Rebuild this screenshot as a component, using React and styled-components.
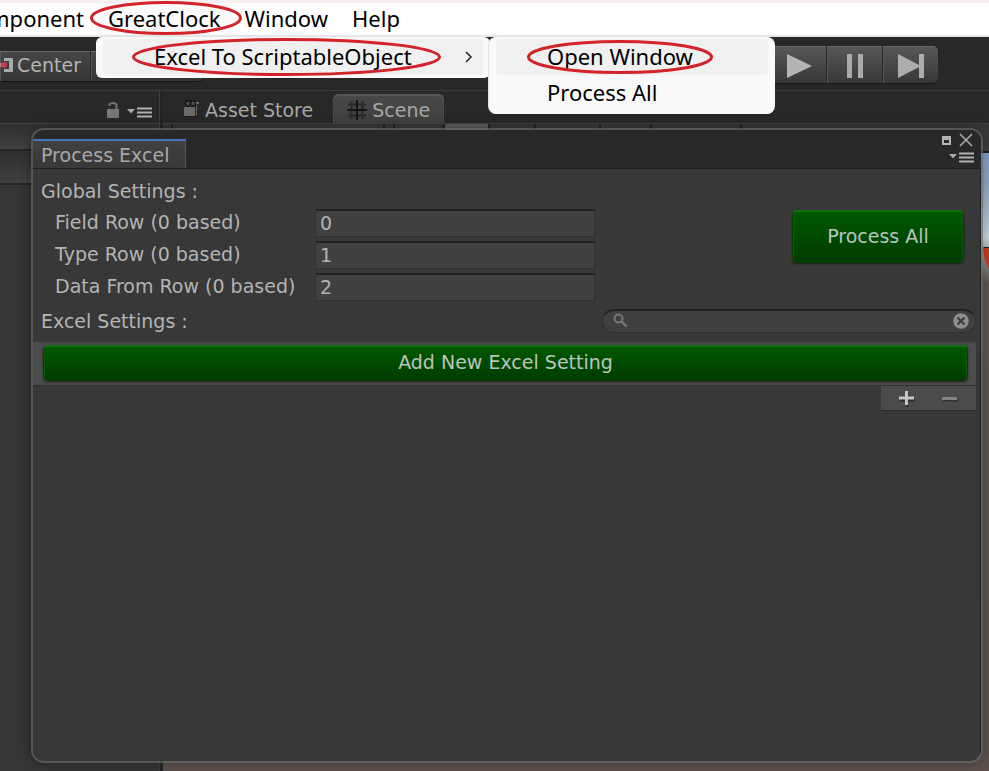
import React, { useState } from "react";
import styled, { createGlobalStyle } from "styled-components";

const GlobalStyle = createGlobalStyle`
  *, *::before, *::after { box-sizing: border-box; }
  body { margin: 0; background: #282828; }
  button, input { font: inherit; color: inherit; margin: 0; }
`;

const editorFont = '"DejaVu Sans", sans-serif';
const menuFont = '"Noto Sans", "Open Sans", sans-serif';

const Page = styled.div`
  position: relative;
  display: flex;
  flex-direction: column;
  min-height: 100vh;
  overflow: hidden;
  background: #282828;
  color: #b4b4b4;
  font: 19px/24px ${editorFont};
`;

/* ---------- menu bar ---------- */

const MenuBar = styled.nav`
  display: flex;
  height: 37px;
  border-top: 3px solid #f8eff1;
  border-bottom: 2px solid #e6e6e6;
  background: #fff;
  color: #000;
  font: 22px/32px ${menuFont};
`;

const MenuEntry = styled.div`
  position: relative;
  display: flex;
  flex: none;
`;

const MenuButton = styled.button`
  display: block;
  border: 0;
  padding: 0 12px 2px;
  background: ${(p) => (p.$open ? "#fafafa" : "transparent")};
  line-height: 30px;
`;

const ClippedEntry = styled(MenuEntry)`
  width: 96px;
  overflow: hidden;
  justify-content: flex-end;
`;

const Dropdown = styled.div`
  position: absolute;
  z-index: 5;
  top: 34px;
  left: 0;
  width: 394px;
  padding: 2px 7px 3px;
  border-radius: 6px;
  background: #f9f9f9;
`;

const Submenu = styled(Dropdown)`
  top: 0;
  left: 393px;
  width: 286px;
  border-radius: 8px;
  box-shadow: -1px 0 #e2e2e2;
`;

const MenuItem = styled.button`
  position: relative;
  display: flex;
  align-items: center;
  justify-content: space-between;
  width: 100%;
  height: 36px;
  border: 0;
  border-radius: 4px;
  padding: 0 10px 2px 51px;
  background: ${(p) => (p.$active ? "#f0f0f0" : "transparent")};
  line-height: 32px;
  white-space: nowrap;
`;

const Ring = styled.svg`
  position: absolute;
  z-index: 6;
  top: ${(p) => p.$top}px;
  left: ${(p) => p.$left}px;
  overflow: visible;
  pointer-events: none;
`;

function Highlight({ width, height, top, left }) {
  return (
    <Ring width={width} height={height} $top={top} $left={left} aria-hidden="true">
      <ellipse
        cx={width / 2}
        cy={height / 2}
        rx={width / 2 - 1.5}
        ry={height / 2 - 1.5}
        fill="none"
        stroke="#d2232a"
        strokeWidth="3"
      />
    </Ring>
  );
}

/* ---------- toolbar ---------- */

const Toolbar = styled.header`
  display: flex;
  justify-content: space-between;
  align-items: flex-start;
  height: 54px;
  padding: 9px 51px 0 0;
  border-bottom: 1px solid #3a3a3a;
`;

const ButtonGroup = styled.div`
  display: flex;
  overflow: hidden;
  margin-top: ${(p) => (p.$low ? 5 : 0)}px;
  border-radius: ${(p) => (p.$low ? "0 5px 5px 0" : "5px")};
  box-shadow: 0 1px 1px #151515;
`;

const ToolButton = styled.button`
  display: flex;
  align-items: center;
  justify-content: ${(p) => (p.$tall ? "center" : "flex-end")};
  gap: 4px;
  width: ${(p) => p.$width}px;
  height: ${(p) => (p.$tall ? 37 : 30)}px;
  padding: ${(p) => (p.$tall ? "3px 0 0" : "0 9px 2px 0")};
  border: solid #262626;
  border-width: 0 1px 0 0;
  background: linear-gradient(${(p) => (p.$tall ? "#585858, #383838" : "#474747, #353535")});
  box-shadow: inset 0 1px #6a6a6a, inset 1px 0 #565656;
  &:last-child { border-right: 0; }
`;

/* ---------- docked panels ---------- */

const Docks = styled.main`
  display: grid;
  grid-template-columns: 160px minmax(0, 1fr);
  column-gap: 3px;
  flex: 1;
  background: #242424;
`;

const Dock = styled.section`
  display: flex;
  flex-direction: column;
  background: #282828;
  border-right: ${(p) => (p.$edge ? "1px solid #404040" : "0")};
`;

const TabStrip = styled.div`
  display: flex;
  align-items: flex-end;
  justify-content: ${(p) => (p.$end ? "flex-end" : "flex-start")};
  gap: ${(p) => (p.$end ? 7 : 6)}px;
  height: 33px;
  padding: ${(p) => (p.$end ? "0 7px 5px 0" : "0 0 0 10px")};
  border-bottom: 1px solid #454545;
`;

const DockTab = styled.button`
  display: flex;
  align-items: center;
  gap: 5px;
  height: 29px;
  padding: 2px 14px 0 ${(p) => (p.$active ? 14 : 10)}px;
  border: 0;
  border-radius: 6px 6px 0 0;
  background: ${(p) => (p.$active ? "linear-gradient(#484848, #404040)" : "transparent")};
  box-shadow: ${(p) => (p.$active ? "inset 0 2px #565656, inset 1px 0 #4c4c4c, inset -1px 0 #4c4c4c" : "none")};
  color: #a6a6a6;
  white-space: nowrap;
`;

const IconButton = styled.button`
  display: flex;
  padding: 0;
  border: 0;
  background: none;
`;

const PanelHeader = styled.div`
  height: ${(p) => p.$height}px;
  border-bottom: 2px solid #242424;
  background: linear-gradient(#303030, #404040);
`;

const PanelBody = styled.div`
  flex: 1;
  background: #353535;
`;

const SceneBar = styled.div`
  display: flex;
  height: 29px;
  background: linear-gradient(#363636, #404040);
  border-bottom: 2px solid #202020;
`;

const SceneSegment = styled.div`
  width: ${(p) => p.$width}px;
  border-right: 2px solid #222;
  background: ${(p) => (p.$lit ? "#5a5a5a" : "transparent")};
`;

const SceneView = styled.div`
  flex: 1;
  display: flex;
  justify-content: flex-end;
  align-items: flex-start;
  padding-top: 94px;
  background: linear-gradient(#809fd0 0, #8da9c8 30px, #c5d9df 85px, #8d9494 105px, #605651 130px, #5c514c 100%);
`;

/* ---------- floating window ---------- */

const FloatingWindow = styled.section`
  position: absolute;
  z-index: 2;
  top: 128px;
  right: 6px;
  bottom: 8px;
  left: 31px;
  display: flex;
  flex-direction: column;
  overflow: hidden;
  border: 2px solid rgba(105, 105, 105, 0.65);
  border-radius: 13px;
  background: #383838;
  background-clip: padding-box;
  box-shadow: 0 0 14px rgba(0, 0, 0, 0.3);
`;

const TitleBar = styled.div`
  display: flex;
  justify-content: space-between;
  align-items: flex-end;
  flex: none;
  height: 39px;
  background: #282828;
  border-bottom: 1px solid #1e1e1e;
`;

const WindowTab = styled.h1`
  margin: 0;
  height: 29px;
  padding: 2px 16px 0 8px;
  border-top: 2px solid #4676ba;
  border-right: 1px solid #555;
  background: linear-gradient(#414141, #383838);
  color: #a8a8a8;
  font: inherit;
`;

const WindowControls = styled.div`
  display: grid;
  grid-template-columns: 11px 16px;
  gap: 5px 6px;
  justify-items: center;
  align-items: center;
  padding: 0 7px 5px 0;
`;

const WideCell = styled.div`
  grid-column: 1 / -1;
  justify-self: end;
`;

const WindowBody = styled.div`
  flex: 1;
  border-right: 1px solid #202020;
  padding: 10px 4px 0 0;
`;

const Heading = styled.h2`
  margin: 0;
  font: inherit;
`;

const GlobalSettings = styled.form`
  padding: 0 12px 0 8px;
`;

const SettingsRow = styled.div`
  display: flex;
  align-items: flex-start;
  justify-content: space-between;
  gap: 20px;
  padding: 6px 0 0 14px;
`;

const Fields = styled.div`
  display: grid;
  grid-template-columns: 260px minmax(80px, 280px);
  row-gap: 4px;
`;

const FieldLabel = styled.label`
  line-height: 27px;
  white-space: nowrap;
`;

const TextInput = styled.input`
  width: 100%;
  height: 28px;
  padding: 0 4px 2px;
  border: 1px solid #303030;
  border-top: 2px solid #232323;
  border-radius: 0;
  background: #414141;
  outline: 0;
`;

const GreenButton = styled.button`
  display: block;
  width: ${(p) => (p.$large ? "172px" : "100%")};
  height: ${(p) => (p.$large ? 53 : 36)}px;
  margin-top: ${(p) => (p.$large ? 1 : 0)}px;
  padding: 0 0 3px;
  border: 1px solid #004200;
  border-top: 2px solid #0d700d;
  border-radius: 5px;
  background: linear-gradient(#005800, #003b00);
  box-shadow: 0 1px 2px #1c1c1c, inset 1px 0 #075d07, inset -1px 0 #075d07;
  color: #b9c6b9;
`;

const ExcelHeader = styled.div`
  display: flex;
  align-items: center;
  justify-content: space-between;
  padding: 8px 0 9px 8px;
`;

const SearchBox = styled.div`
  display: flex;
  align-items: center;
  gap: 6px;
  width: 374px;
  height: 24px;
  padding: 0 6px 2px 10px;
  border: 1px solid #303030;
  border-top: 2px solid #202020;
  border-radius: 12px;
  background: #404040;
`;

const SearchInput = styled.input`
  flex: 1;
  min-width: 0;
  height: 20px;
  padding: 0;
  border: 0;
  background: none;
  outline: 0;
`;

const SettingList = styled.div`
  padding: 3px 8px 4px 10px;
  background: #4c4c4c;
  border-bottom: 1px solid #303030;
`;

const ListFooter = styled.div`
  display: flex;
  justify-content: space-around;
  align-items: center;
  width: 95px;
  height: 25px;
  margin-left: auto;
  padding: 0 4px;
  background: #4b4b4b;
  border-bottom: 1px solid #2a2a2a;
`;

/* ---------- icons ---------- */

const OptionsIcon = () => (
  <svg width="25" height="11" viewBox="0 0 25 11" aria-hidden="true">
    <path d="M0 2h8L4 6.500Z" fill="#aaa" />
    <path d="M10 1.500h15M10 5.500h15M10 9.500h15" stroke="#b0b0b0" strokeWidth="2" />
  </svg>
);

const LockIcon = () => (
  <svg width="14" height="16" viewBox="0 0 14 16" aria-hidden="true">
    <rect x="1" y="7" width="12" height="9" fill="#777" />
    <path d="M3.500 4V2.500C4 1.500 5 1 7 1s3.500.8 3.500 2.500V7" fill="none" stroke="#707070" strokeWidth="2" />
  </svg>
);

const CenterIcon = () => (
  <svg width="13" height="16" viewBox="0 0 13 16" aria-hidden="true">
    <path d="M4 1h9v14H4v-3h5V4H4Z" fill="#a9a9a9" />
    <path d="M0 6h4v4H0Z" fill="#968a8c" />
    <circle cx="4" cy="8" r="3" fill="#c83c50" />
  </svg>
);

const StoreIcon = () => (
  <svg width="17" height="20" viewBox="0 0 17 20" aria-hidden="true">
    <path d="M1 7h11v9H1Z" fill="#6b6b6b" />
    <path d="M12 2h4v2h-2v11h-1V4h-1Z" fill="#666" />
    <circle cx="5" cy="3.500" r="2.500" fill="#555" stroke="#111" strokeWidth="2" strokeDasharray="2 1" />
    <circle cx="10" cy="3.500" r="2.500" fill="#555" stroke="#111" strokeWidth="2" strokeDasharray="2 1" />
    <path d="M0 16.500h13" stroke="#1b1b1b" />
  </svg>
);

const GridIcon = () => (
  <svg width="20" height="20" viewBox="0 0 20 20" aria-hidden="true">
    <path d="M4.500 1v18M15.500 1v18M1 4.500h18M1 15.500h18" stroke="#292929" strokeWidth="2" />
    <path d="M10 0v20M0 10h20" stroke="#151515" strokeWidth="2" />
  </svg>
);

const PlayIcon = () => (
  <svg width="27" height="26" viewBox="0 0 27 26" aria-hidden="true">
    <path d="M1 1v24l25-12Z" fill="#b4b4b4" />
  </svg>
);

const PauseIcon = () => (
  <svg width="18" height="26" viewBox="0 0 18 26" aria-hidden="true">
    <path d="M1 1h5v24H1ZM12 1h5v24h-5Z" fill="#aaa" />
  </svg>
);

const StepIcon = () => (
  <svg width="28" height="26" viewBox="0 0 28 26" aria-hidden="true">
    <path d="M1 1v24l21-11v11h5V1h-5v11Z" fill="#adadad" />
  </svg>
);

const ChevronIcon = () => (
  <svg width="8" height="14" viewBox="0 0 8 14" aria-hidden="true">
    <path d="m1 3 5 5-5 5" fill="none" stroke="#222" strokeWidth="1.500" />
  </svg>
);

const MaximizeIcon = () => (
  <svg width="9" height="9" viewBox="0 0 9 9" aria-hidden="true">
    <path d="M0 0h9v9H0ZM2 4v3h5V4Z" fill="#b5b5b5" fillRule="evenodd" />
  </svg>
);

const CloseIcon = () => (
  <svg width="14" height="14" viewBox="0 0 14 14" aria-hidden="true">
    <path d="m1 1 12 12M13 1 1 13" stroke="#aaa" strokeWidth="1.600" />
  </svg>
);

const SearchIcon = () => (
  <svg width="15" height="15" viewBox="0 0 15 15" aria-hidden="true">
    <circle cx="5.500" cy="5.500" r="4" fill="none" stroke="#777" strokeWidth="2" />
    <path d="m8.500 8.500 5 5" stroke="#777" strokeWidth="2.400" />
  </svg>
);

const ClearIcon = () => (
  <svg width="16" height="16" viewBox="0 0 16 16" aria-hidden="true">
    <circle cx="8" cy="8" r="7.800" fill="#8e8e8e" />
    <path d="m4.500 4.500 7 7m0-7-7 7" stroke="#383838" strokeWidth="2" />
  </svg>
);

const PlusIcon = () => (
  <svg width="16" height="17" viewBox="0 0 16 17" aria-hidden="true">
    <path d="M8 2v15M1 10h15" stroke="#2c2c2c" strokeWidth="3" />
    <path d="M7.500 1v14M0 8h15" stroke="#c4c4c4" strokeWidth="3" />
  </svg>
);

const MinusIcon = () => (
  <svg width="16" height="7" viewBox="0 0 16 7" aria-hidden="true">
    <path d="M1 5h15" stroke="#333" strokeWidth="3" />
    <path d="M0 3.500h15" stroke="#828282" strokeWidth="3" />
  </svg>
);

const Gizmo = () => (
  <svg width="6" height="22" viewBox="0 0 6 22" aria-hidden="true">
    <path d="M0 0h6v22C3 17 0 10 0 0Z" fill="#c83d28" />
    <path d="M1 .5h5" stroke="#222" />
  </svg>
);

const initialRows = [
  { id: "field-row", label: "Field Row (0 based)", value: "0" },
  { id: "type-row", label: "Type Row (0 based)", value: "1" },
  { id: "data-row", label: "Data From Row (0 based)", value: "2" },
];

function ProcessExcelWindow() {
  const [rows, setRows] = useState(initialRows);
  const [query, setQuery] = useState("");
  const update = (id, value) =>
    setRows(rows.map((row) => (row.id === id ? { ...row, value } : row)));

  return (
    <FloatingWindow aria-label="Process Excel">
      <TitleBar>
        <WindowTab>Process Excel</WindowTab>
        <WindowControls>
          <IconButton aria-label="Maximize"><MaximizeIcon /></IconButton>
          <IconButton aria-label="Close"><CloseIcon /></IconButton>
          <WideCell>
            <IconButton aria-label="Window options"><OptionsIcon /></IconButton>
          </WideCell>
        </WindowControls>
      </TitleBar>
      <WindowBody>
        <GlobalSettings onSubmit={(e) => e.preventDefault()}>
          <Heading>Global Settings :</Heading>
          <SettingsRow>
            <Fields>
              {rows.map((row) => (
                <React.Fragment key={row.id}>
                  <FieldLabel htmlFor={row.id}>{row.label}</FieldLabel>
                  <TextInput
                    id={row.id}
                    value={row.value}
                    onChange={(e) => update(row.id, e.target.value)}
                  />
                </React.Fragment>
              ))}
            </Fields>
            <GreenButton $large>Process All</GreenButton>
          </SettingsRow>
        </GlobalSettings>
        <ExcelHeader>
          <Heading>Excel Settings :</Heading>
          <SearchBox>
            <SearchIcon />
            <SearchInput
              aria-label="Search excel settings"
              value={query}
              onChange={(e) => setQuery(e.target.value)}
            />
            <IconButton aria-label="Clear search" onClick={() => setQuery("")}>
              <ClearIcon />
            </IconButton>
          </SearchBox>
        </ExcelHeader>
        <SettingList>
          <GreenButton>Add New Excel Setting</GreenButton>
        </SettingList>
        <ListFooter>
          <IconButton aria-label="Add"><PlusIcon /></IconButton>
          <IconButton aria-label="Remove"><MinusIcon /></IconButton>
        </ListFooter>
      </WindowBody>
    </FloatingWindow>
  );
}

export default function App() {
  return (
    <Page>
      <GlobalStyle />
      <MenuBar>
        <ClippedEntry><MenuButton>Component</MenuButton></ClippedEntry>
        <MenuEntry>
          <MenuButton $open>GreatClock</MenuButton>
          <Highlight width={152} height={34} top={-2} left={-6} />
          <Dropdown>
            <MenuItem $active>
              Excel To ScriptableObject
              <ChevronIcon />
              <Highlight width={309} height={38} top={-1} left={29} />
            </MenuItem>
            <Submenu>
              <MenuItem $active>
                Open Window
                <Highlight width={186} height={34} top={1} left={31} />
              </MenuItem>
              <MenuItem>Process All</MenuItem>
            </Submenu>
          </Dropdown>
        </MenuEntry>
        <MenuEntry><MenuButton>Window</MenuButton></MenuEntry>
        <MenuEntry><MenuButton>Help</MenuButton></MenuEntry>
      </MenuBar>
      <Toolbar>
        <ButtonGroup $low>
          <ToolButton $width={91}><CenterIcon />Center</ToolButton>
          <ToolButton $width={112} aria-label="Pivot rotation" />
        </ButtonGroup>
        <ButtonGroup>
          <ToolButton $tall $width={55} aria-label="Play"><PlayIcon /></ToolButton>
          <ToolButton $tall $width={56} aria-label="Pause"><PauseIcon /></ToolButton>
          <ToolButton $tall $width={55} aria-label="Step"><StepIcon /></ToolButton>
        </ButtonGroup>
      </Toolbar>
      <Docks>
        <Dock $edge>
          <TabStrip $end>
            <IconButton aria-label="Lock panel"><LockIcon /></IconButton>
            <IconButton aria-label="Panel options"><OptionsIcon /></IconButton>
          </TabStrip>
          <PanelHeader $height={27} />
          <PanelHeader $height={34} />
          <PanelBody />
        </Dock>
        <Dock>
          <TabStrip>
            <DockTab><StoreIcon />Asset Store</DockTab>
            <DockTab $active><GridIcon />Scene</DockTab>
          </TabStrip>
          <SceneBar>
            <SceneSegment $width={10} />
            <SceneSegment $width={212} />
            <SceneSegment $width={10} />
            <SceneSegment $width={50} />
            <SceneSegment $width={45} $lit />
            <SceneSegment $width={46} />
            <SceneSegment $width={65} />
            <SceneSegment $width={51} />
            <SceneSegment $width={90} />
          </SceneBar>
          <SceneView><Gizmo /></SceneView>
        </Dock>
      </Docks>
      <ProcessExcelWindow />
    </Page>
  );
}
